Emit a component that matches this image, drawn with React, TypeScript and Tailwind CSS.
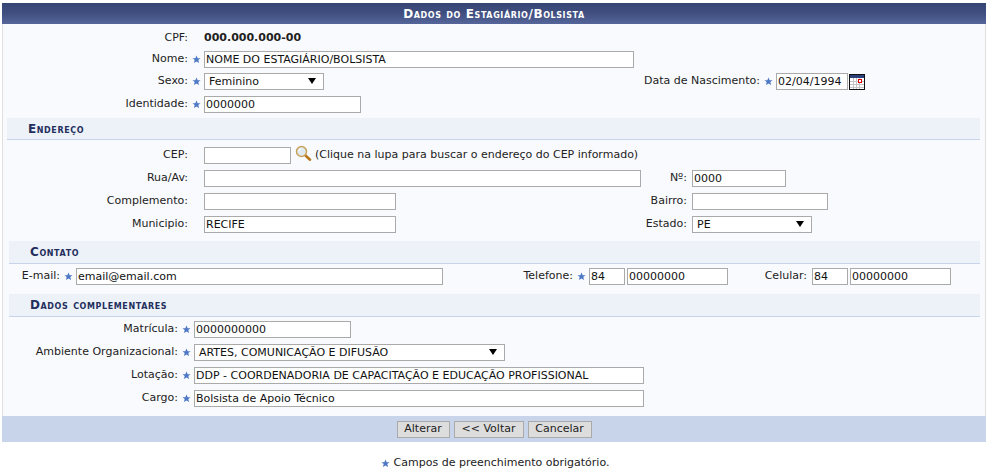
import type { ReactNode } from "react";

const font = "font-['DejaVu_Sans',Verdana,sans-serif]";

function Star() {
  return (
    <svg viewBox="0 0 10 10" className="w-[9px] h-[9px] shrink-0">
      <path d="M5 .6l1.3 3h3.2L7 5.6l.9 3.4L5 7.2 2.1 9 3 5.6.5 3.6h3.2z" fill="#4d78c4" />
    </svg>
  );
}

function Label({ width, required, children }: { width: string; required?: boolean; children: ReactNode }) {
  return (
    <div className={`${width} shrink-0 flex justify-end items-center`}>
      <span className="whitespace-nowrap">{children}</span>
      {required && (
        <span className="w-[16px] pl-[4px] flex items-center shrink-0">
          <Star />
        </span>
      )}
    </div>
  );
}

function Field({ width, value }: { width: string; value?: string }) {
  return (
    <input
      readOnly
      value={value ?? ""}
      className={`${width} h-[17px] shrink-0 border border-[#aaaaaa] bg-white px-[1px] text-[11px] text-[#111] outline-none`}
    />
  );
}

function Select({ width, value }: { width: string; value: string }) {
  return (
    <div className={`${width} relative h-[17px] shrink-0`}>
      <select
        defaultValue={value}
        className="w-full h-full appearance-none border border-[#aaaaaa] bg-white pl-[4px] text-[11px] text-[#111] outline-none"
      >
        <option>{value}</option>
      </select>
      <span className="absolute right-[8px] top-[5px] w-0 h-0 border-x-[4px] border-x-transparent border-t-[6px] border-t-black" />
    </div>
  );
}

function SectionTitle({ children, inset }: { children: ReactNode; inset: string }) {
  return (
    <div className={`${inset} bg-[#edf1f8] border-b border-[#c8d4ea] flex items-center font-bold text-[#222e5c] text-[12px] tracking-[0.6px] [font-variant:small-caps]`}>
      {children}
    </div>
  );
}

function Row({ height = "h-[23px]", children }: { height?: string; children: ReactNode }) {
  return <div className={`${height} flex items-center`}>{children}</div>;
}

function Lupa() {
  return (
    <svg viewBox="0 0 17 17" className="w-[17px] h-[17px] shrink-0">
      <path d="M10.5 10.5l4.5 4.2" stroke="#b9771c" strokeWidth="2.6" strokeLinecap="round" />
      <circle cx="6.5" cy="6.5" r="5" fill="#dfe9f2" stroke="#c9a25a" strokeWidth="1.5" />
      <path d="M3.8 6.5a2.7 2.7 0 0 1 2.7-2.7" stroke="#fff" strokeWidth="1.2" fill="none" />
    </svg>
  );
}

function Calendar() {
  return (
    <svg viewBox="0 0 16 16" className="w-[16px] h-[16px] shrink-0">
      <rect x=".5" y=".5" width="15" height="15" fill="#fff" stroke="#111" />
      <rect x="1" y="1" width="14" height="3" fill="#2b3f7a" />
      <path d="M1 7.5h14M1 10.5h14M1 13.5h14M4.5 4v11M7.5 4v11M10.5 4v11" stroke="#c4c4c4" />
      <rect x="9.5" y="5.5" width="3" height="3" fill="#fff" stroke="#e00000" />
    </svg>
  );
}

function Button({ width, children }: { width: string; children: ReactNode }) {
  return (
    <button className={`${width} h-[17px] bg-[#dddddd] border border-[#aaaaaa] text-[11px] text-[#222] flex items-center justify-center`}>
      {children}
    </button>
  );
}

export default function App() {
  return (
    <div className={`${font} w-[988px] h-[474px] bg-white text-[11px] text-[#222] overflow-hidden pt-[3px] pl-[2px]`}>
      <div className="w-[984px] border-x border-[#e0e0e0] bg-[#f9fafd]">
        <div className="h-[21px] -mx-px bg-gradient-to-b from-[#354573] via-[#404f80] to-[#56669a] flex items-center justify-center font-bold text-white text-[12px] tracking-[0.6px] [font-variant:small-caps]">
          Dados do Estagiário/Bolsista
        </div>

        <div className="pt-[4px] pb-[2px]">
          <Row height="h-[20px]">
            <Label width="w-[185px]">CPF:</Label>
            <span className="ml-[16px] font-bold">000.000.000-00</span>
          </Row>
          <Row height="h-[22px]">
            <Label width="w-[201px]" required>Nome:</Label>
            <Field width="w-[430px]" value="NOME DO ESTAGIÁRIO/BOLSISTA" />
          </Row>
          <Row>
            <Label width="w-[201px]" required>Sexo:</Label>
            <Select width="w-[120px]" value="Feminino" />
            <Label width="w-[452px]" required>Data de Nascimento:</Label>
            <Field width="w-[72px]" value="02/04/1994" />
            <span className="ml-[1px]"><Calendar /></span>
          </Row>
          <Row>
            <Label width="w-[201px]" required>Identidade:</Label>
            <Field width="w-[157px]" value="0000000" />
          </Row>
        </div>

        <SectionTitle inset="ml-[4px] mr-[5px] h-[22px] pl-[21px]">Endereço</SectionTitle>
        <div className="pt-[4px] pb-[5px]">
          <Row>
            <Label width="w-[185px]">CEP:</Label>
            <span className="ml-[16px]"><Field width="w-[87px]" /></span>
            <span className="ml-[4px] -mt-[5px]"><Lupa /></span>
            <span className="ml-[3px]">(Clique na lupa para buscar o endereço do CEP informado)</span>
          </Row>
          <Row>
            <Label width="w-[185px]">Rua/Av:</Label>
            <span className="ml-[16px]"><Field width="w-[437px]" /></span>
            <Label width="w-[46px]">Nº:</Label>
            <span className="ml-[5px]"><Field width="w-[94px]" value="0000" /></span>
          </Row>
          <Row>
            <Label width="w-[185px]">Complemento:</Label>
            <span className="ml-[16px]"><Field width="w-[192px]" /></span>
            <Label width="w-[291px]">Bairro:</Label>
            <span className="ml-[5px]"><Field width="w-[136px]" /></span>
          </Row>
          <Row>
            <Label width="w-[185px]">Municipio:</Label>
            <span className="ml-[16px]"><Field width="w-[192px]" value="RECIFE" /></span>
            <Label width="w-[291px]">Estado:</Label>
            <span className="ml-[5px]"><Select width="w-[120px]" value="PE" /></span>
          </Row>
        </div>

        <SectionTitle inset="ml-[6px] mr-[5px] h-[23px] pl-[21px]">Contato</SectionTitle>
        <div className="pt-[1px] pb-[6px]">
          <Row>
            <Label width="w-[73px]" required>E-mail:</Label>
            <Field width="w-[367px]" value="email@email.com" />
            <Label width="w-[146px]" required>Telefone:</Label>
            <Field width="w-[36px]" value="84" />
            <span className="ml-[2px]"><Field width="w-[101px]" value="00000000" /></span>
            <Label width="w-[79px]">Celular:</Label>
            <span className="ml-[5px]"><Field width="w-[36px]" value="84" /></span>
            <span className="ml-[2px]"><Field width="w-[101px]" value="00000000" /></span>
          </Row>
        </div>

        <SectionTitle inset="ml-[6px] mr-[5px] h-[23px] pl-[21px]">Dados complementares</SectionTitle>
        <div className="pt-[1px] pb-[6px]">
          <Row>
            <Label width="w-[191px]" required>Matrícula:</Label>
            <Field width="w-[157px]" value="0000000000" />
          </Row>
          <Row>
            <Label width="w-[191px]" required>Ambiente Organizacional:</Label>
            <Select width="w-[311px]" value="ARTES, COMUNICAÇÃO E DIFUSÃO" />
          </Row>
          <Row>
            <Label width="w-[191px]" required>Lotação:</Label>
            <Field width="w-[450px]" value="DDP - COORDENADORIA DE CAPACITAÇÃO E EDUCAÇÃO PROFISSIONAL" />
          </Row>
          <Row>
            <Label width="w-[191px]" required>Cargo:</Label>
            <Field width="w-[450px]" value="Bolsista de Apoio Técnico" />
          </Row>
        </div>

        <div className="h-[26px] -mx-px bg-[#c8d4ea] flex items-center justify-center gap-[4px] pt-[1px]">
          <Button width="w-[53px]">Alterar</Button>
          <Button width="w-[70px]">&lt;&lt; Voltar</Button>
          <Button width="w-[64px]">Cancelar</Button>
        </div>
      </div>

      <div className="mt-[13px] flex items-center justify-center gap-[4px]">
        <Star />
        <span>Campos de preenchimento obrigatório.</span>
      </div>
    </div>
  );
}
